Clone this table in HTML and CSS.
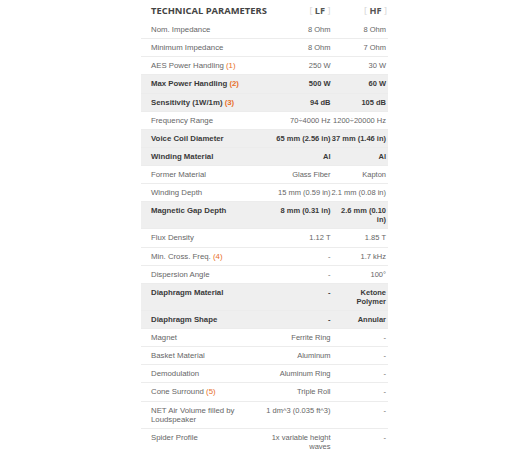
FILE: index.html
```html
<!DOCTYPE html>
<html>
<head>
<meta charset="utf-8">
<link rel="stylesheet" href="styles.css">
</head>
<body>
<table class="params">
  <colgroup><col class="c-label"><col class="c-lf"><col class="c-hf"></colgroup>
  <thead>
    <tr class="head">
      <th class="title">TECHNICAL PARAMETERS</th>
      <th class="band"><span class="br">[</span> LF <span class="br">]</span></th>
      <th class="band hf"><span class="br">[</span> HF <span class="br">]</span></th>
    </tr>
  </thead>
  <tbody>
    <tr><td>Nom. Impedance</td><td>8 Ohm</td><td>8 Ohm</td></tr>
    <tr><td>Minimum Impedance</td><td>8 Ohm</td><td>7 Ohm</td></tr>
    <tr><td>AES Power Handling <span class="note">(1)</span></td><td>250 W</td><td>30 W</td></tr>
    <tr class="hl"><td>Max Power Handling <span class="note">(2)</span></td><td>500 W</td><td>60 W</td></tr>
    <tr class="hl"><td>Sensitivity (1W/1m) <span class="note">(3)</span></td><td>94 dB</td><td>105 dB</td></tr>
    <tr><td>Frequency Range</td><td>70÷4000 Hz</td><td>1200÷20000 Hz</td></tr>
    <tr class="hl"><td>Voice Coil Diameter</td><td>65 mm (2.56 in)</td><td>37 mm (1.46 in)</td></tr>
    <tr class="hl"><td>Winding Material</td><td>Al</td><td>Al</td></tr>
    <tr><td>Former Material</td><td>Glass Fiber</td><td>Kapton</td></tr>
    <tr><td>Winding Depth</td><td>15 mm (0.59 in)</td><td>2.1 mm (0.08 in)</td></tr>
    <tr class="hl"><td>Magnetic Gap Depth</td><td>8 mm (0.31 in)</td><td>2.6 mm (0.10 in)</td></tr>
    <tr><td>Flux Density</td><td>1.12 T</td><td>1.85 T</td></tr>
    <tr><td>Min. Cross. Freq. <span class="note">(4)</span></td><td>-</td><td>1.7 kHz</td></tr>
    <tr><td>Dispersion Angle</td><td>-</td><td>100°</td></tr>
    <tr class="hl"><td>Diaphragm Material</td><td>-</td><td>Ketone Polymer</td></tr>
    <tr class="hl"><td>Diaphragm Shape</td><td>-</td><td>Annular</td></tr>
    <tr><td>Magnet</td><td>Ferrite Ring</td><td>-</td></tr>
    <tr><td>Basket Material</td><td>Aluminum</td><td>-</td></tr>
    <tr><td>Demodulation</td><td>Aluminum Ring</td><td>-</td></tr>
    <tr><td>Cone Surround <span class="note">(5)</span></td><td>Triple Roll</td><td>-</td></tr>
    <tr><td>NET Air Volume filled by Loudspeaker</td><td>1 dm^3 (0.035 ft^3)</td><td>-</td></tr>
    <tr><td>Spider Profile</td><td>1x variable height waves</td><td>-</td></tr>
  </tbody>
</table>
</body>
</html>
```
FILE: styles.css
```css
html, body {
  margin: 0;
  padding: 0;
  background: #ffffff;
}
.params {
  margin: 0 0 0 141px;
  width: 247px;
  table-layout: fixed;
  border-collapse: collapse;
  font-family: "Liberation Sans", Arial, sans-serif;
  font-size: 7.5px;
  line-height: 9px;
  color: #666;
}
.c-label { width: 123px; }
.c-lf { width: 66.5px; }
.c-hf { width: 57.5px; }
.head th {
  height: 21px;
  padding: 0;
  vertical-align: middle;
  white-space: nowrap;
  line-height: 12px;
}
.head .title {
  text-align: left;
  padding-left: 10px;
  font-family: "Open Sans", sans-serif;
  font-size: 9.4px;
  font-weight: 700;
  color: #444;
}
.head .band {
  text-align: right;
  font-family: "Open Sans", sans-serif;
  font-size: 9.2px;
  font-weight: 700;
  color: #555;
}
.head .band.hf { padding-right: 1px; }
.br { color: #d4d4d4; font-weight: 400; }
tbody td {
  padding: 4.07px 0;
  border-bottom: 1px solid #ececec;
  vertical-align: top;
  text-align: right;
}
tbody td:first-child {
  text-align: left;
  padding-left: 10px;
  padding-right: 8px;
  font-size: 7.8px;
}
tbody td:last-child { padding-right: 2px; }
.hl td {
  background: #efefef;
  font-weight: 700;
  color: #3a3a3a;
}
.note { color: #e8702a; }
```
